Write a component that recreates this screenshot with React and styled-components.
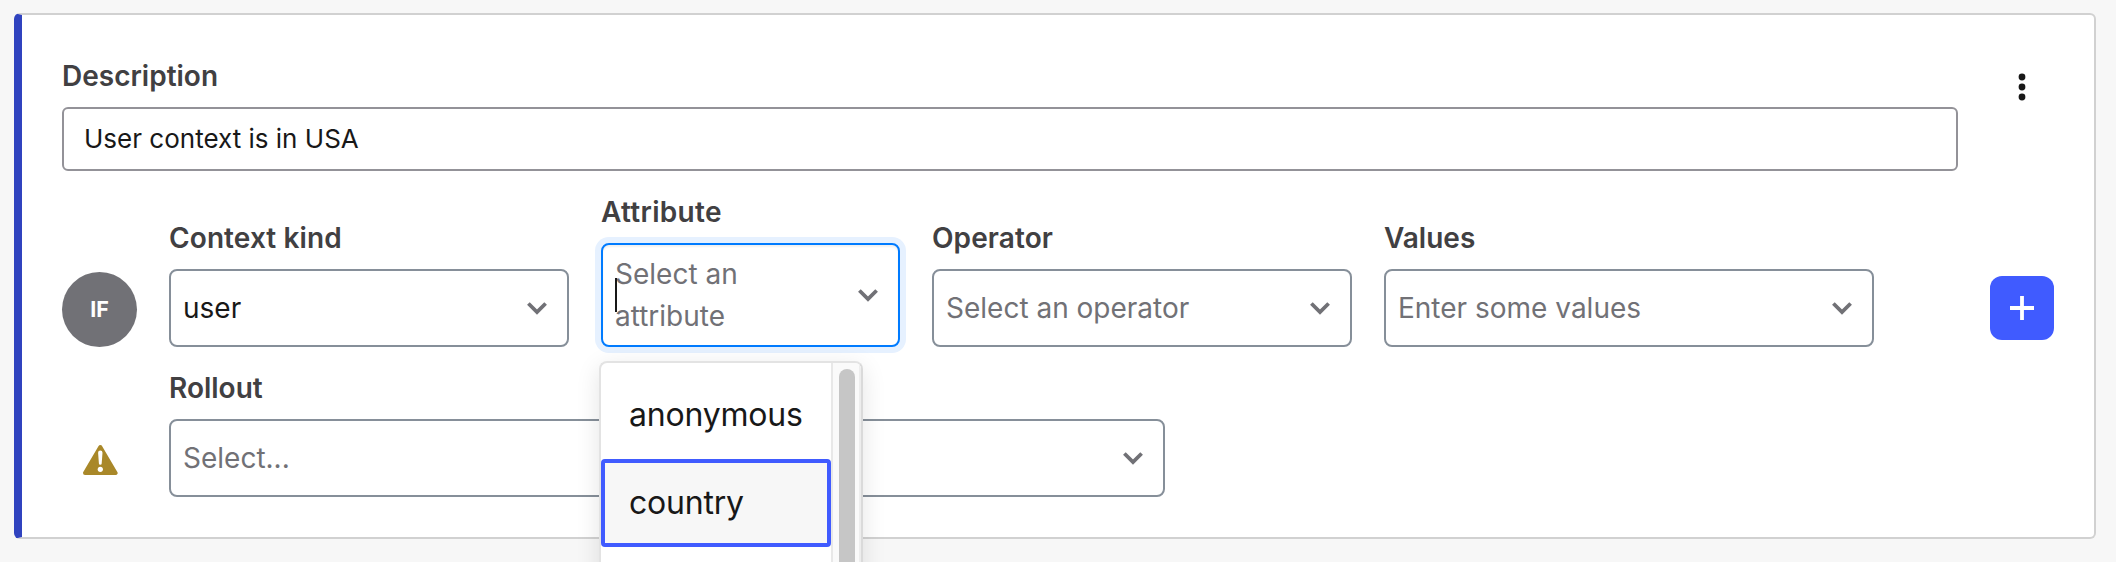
import React from 'react';
import styled, { createGlobalStyle, css } from 'styled-components';

const Global = createGlobalStyle`
  * { box-sizing: border-box; }
  html, body { margin: 0; }
  body {
    background: #f7f7f7;
    font-family: Inter, "Liberation Sans", sans-serif;
    overflow: hidden;
  }
`;

const Page = styled.main`
  height: 562px;
  padding: 13px 20px 0 14px;
  overflow: hidden;
`;

const Card = styled.section`
  display: flex;
  flex-direction: column;
  height: 526px;
  padding: 43px 40px 0 40px;
  background: #fff;
  border: 2px solid #d1d1d1;
  border-left: 8px solid #3043bf;
  border-radius: 6px;
`;

const TopRow = styled.div`
  display: flex;
  justify-content: space-between;
  align-items: flex-start;
`;

const Label = styled.label`
  display: block;
  height: 36px;
  line-height: 36px;
  font-size: 28px;
  font-weight: 600;
  letter-spacing: ${(p) => p.$tracking ?? 0}px;
  color: #414042;
  white-space: nowrap;
  margin-bottom: 13px;
`;

const DescriptionField = styled.div`
  width: 1896px;
`;

const TextInput = styled.div`
  height: 64px;
  padding: 0 20px;
  border: 2px solid #939298;
  border-radius: 6px;
  font-size: 26px;
  line-height: 60px;
  color: #181818;
`;

const MenuButton = styled.button`
  display: flex;
  width: 64px;
  height: 64px;
  padding: 0;
  border: 0;
  background: none;
`;

const ClauseRow = styled.div`
  display: flex;
  align-items: flex-end;
  height: 176px;
`;

const Lead = styled.div`
  display: flex;
  align-items: center;
  justify-content: center;
  width: 75px;
  height: 75px;
  margin-right: 32px;
`;

const Badge = styled.span`
  width: 75px;
  height: 75px;
  border-radius: 50%;
  background: #717176;
  color: #fff;
  text-align: center;
  font-size: 21.5px;
  font-weight: 700;
  line-height: 75px;
`;

const Field = styled.div`
  position: relative;
  width: ${(p) => p.$width}px;
  margin-right: 32px;
`;

const SelectBox = styled.div`
  display: flex;
  align-items: center;
  justify-content: space-between;
  height: ${(p) => (p.$focused ? 104 : 78)}px;
  padding: 0 18px 0 12px;
  background: #fff;
  border: 2px solid #868f99;
  border-radius: 8px;
  ${(p) => p.$focused && css`
    border-color: #007bff;
    box-shadow: 0 0 0 6px #e6f1ff, inset 0 2px 2px rgba(0, 0, 0, 0.06);
  `}
`;

const SelectText = styled.span`
  position: relative;
  max-width: ${(p) => (p.$narrow ? '170px' : 'none')};
  font-size: 28px;
  line-height: 42px;
  color: ${(p) => (p.$filled ? '#181818' : '#717176')};
`;

const Caret = styled.i`
  position: absolute;
  left: 0;
  top: 25px;
  width: 2px;
  height: 34px;
  background: #181818;
`;

const AddButton = styled.button`
  display: flex;
  align-items: center;
  justify-content: center;
  width: 64px;
  height: 64px;
  margin: 0 0 7px auto;
  padding: 0;
  border: 0;
  border-radius: 12px;
  background: #405bff;
`;

const RolloutRow = styled.div`
  display: flex;
  align-items: flex-end;
  height: 150px;
`;

const Menu = styled.div`
  position: absolute;
  z-index: 2;
  left: -2px;
  top: 167px;
  display: flex;
  width: 264px;
  height: 300px;
  background: #fff;
  border: 2px solid #e3e3e3;
  border-right-color: #dadada;
  border-radius: 8px;
  box-shadow: 0 6px 24px rgba(0, 0, 0, 0.11);
  overflow: hidden;
`;

const Options = styled.div`
  width: 230px;
  padding-top: 8px;
`;

const Option = styled.div`
  height: 88px;
  padding-left: 24px;
  border: 4px solid ${(p) => (p.$active ? '#405bff' : 'transparent')};
  border-radius: 4px;
  background: ${(p) => (p.$active ? '#f7f7f7' : '#fff')};
  color: #181818;
  font-size: 32px;
  letter-spacing: -0.2px;
  line-height: 80px;
`;

const Track = styled.div`
  width: 30px;
  padding: 6px 0 0 6px;
  background: #fafafa;
  border-left: 2px solid #e8e8e8;
  border-right: 2px solid #ededed;
`;

const Thumb = styled.div`
  width: 16px;
  height: 400px;
  border-radius: 8px;
  background: #c6c6c6;
`;

const Chevron = () => (
  <svg width="24" height="16" viewBox="0 0 24 16" fill="none">
    <path d="M3.4 3.5 12 12 20.6 3.5" stroke="#717176" strokeWidth="3.8" />
  </svg>
);

const Select = ({ label, tracking, width, value, placeholder, focused, children }) => (
  <Field $width={width}>
    <Label $tracking={tracking}>{label}</Label>
    <SelectBox $focused={focused}>
      <SelectText $filled={!!value} $narrow={focused}>
        {value || placeholder}
        {focused && <Caret />}
      </SelectText>
      <Chevron />
    </SelectBox>
    {children}
  </Field>
);

export default function App() {
  return (
    <Page>
      <Global />
      <Card>
        <TopRow>
          <DescriptionField>
            <Label>Description</Label>
            <TextInput>User context is in USA</TextInput>
          </DescriptionField>
          <MenuButton aria-label="More options">
            <svg width="64" height="64" viewBox="0 0 64 64" fill="#181818">
              <circle cx="32" cy="19" r="3.4" />
              <circle cx="32" cy="29" r="3.4" />
              <circle cx="32" cy="39" r="3.4" />
            </svg>
          </MenuButton>
        </TopRow>
        <ClauseRow>
          <Lead><Badge>IF</Badge></Lead>
          <Select label="Context kind" tracking={0.1} width={400} value="user" />
          <Select label="Attribute" tracking={0.3} width={299} placeholder="Select an attribute" focused>
            <Menu>
              <Options>
                <Option>anonymous</Option>
                <Option $active>country</Option>
              </Options>
              <Track><Thumb /></Track>
            </Menu>
          </Select>
          <Select label="Operator" tracking={0.1} width={420} placeholder="Select an operator" />
          <Select label="Values" width={490} placeholder="Enter some values" />
          <AddButton aria-label="Add">
            <svg width="24" height="24" viewBox="0 0 24 24" stroke="#fff" strokeWidth="3.8">
              <path d="M12 0v24M0 12h24" />
            </svg>
          </AddButton>
        </ClauseRow>
        <RolloutRow>
          <Lead>
            <svg width="36" height="32" viewBox="0 0 36 32">
              <path d="M18.3 3 33.6 29H3Z" fill="#a98829" stroke="#a98829" strokeWidth="4" strokeLinejoin="round" />
              <path d="M16.1 8.8a2.2 2.2 0 0 1 4.4 0l-.8 10.6a1.4 1.4 0 0 1-2.8 0Z" fill="#fff" />
              <circle cx="18.3" cy="25.3" r="2.6" fill="#fff" />
            </svg>
          </Lead>
          <Select label="Rollout" width={996} placeholder="Select..." />
        </RolloutRow>
      </Card>
    </Page>
  );
}
